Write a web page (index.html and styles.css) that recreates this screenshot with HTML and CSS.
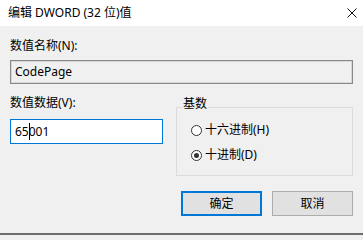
FILE: index.html
```html
<!DOCTYPE html>
<html lang="zh-CN">
<head>
<meta charset="utf-8">
<title>编辑 DWORD (32 位)值</title>
<link rel="stylesheet" href="styles.css">
</head>
<body>
<div class="window">
  <div class="titlebar">
    <span class="title">编辑 DWORD (32 位)值</span>
    <svg class="close" width="10" height="10" viewBox="0 0 10 10"><path d="M0.5 0.5L9.5 9.5M9.5 0.5L0.5 9.5" stroke="#111" stroke-width="1" fill="none"/></svg>
  </div>
  <div class="content">
    <div class="label">数值名称(N):</div>
    <div class="field readonly">CodePage</div>
    <div class="row">
      <div class="col-left">
        <div class="label">数值数据(V):</div>
        <div class="field focused">65<span class="caret"></span>001</div>
      </div>
      <fieldset class="group">
        <legend class="legend">基数</legend>
        <div class="radio"><span class="circle"></span>十六进制(H)</div>
        <div class="radio"><span class="circle checked"></span>十进制(D)</div>
      </fieldset>
    </div>
    <div class="buttons">
      <div class="btn default">确定</div>
      <div class="btn">取消</div>
    </div>
  </div>
</div>
</body>
</html>
```
FILE: styles.css
```css
html, body {
  margin: 0;
  padding: 0;
  width: 363px;
  height: 235px;
  overflow: hidden;
  background: #f0f0f0;
}
body {
  font-family: "Noto Sans", "Noto Sans CJK SC", sans-serif;
  font-size: 12px;
  color: #000;
}
.window {
  width: 363px;
  height: 235px;
}
.titlebar {
  height: 26px;
  background: #fff;
  display: flex;
  align-items: center;
  justify-content: space-between;
  padding: 0 6px 0 8px;
  box-sizing: border-box;
}
.title {
  line-height: 16px;
}
.close {
  display: block;
}
.content {
  height: 209px;
  box-sizing: border-box;
  padding: 12px 10px 0 10px;
  border-bottom: 2px solid #6e6e6e;
}
.label {
  line-height: 16px;
  height: 16px;
}
.field {
  margin-top: 6px;
  height: 24px;
  box-sizing: border-box;
  padding: 0 4px;
  display: flex;
  align-items: center;
  line-height: 16px;
}
.readonly {
  border: 1px solid #8a8a8a;
  box-shadow: inset 0 0 0 1px #d6d6d6;
  background: #f0f0f0;
}
.focused {
  margin-top: 8px;
  height: 25px;
  border: 1px solid #0078d7;
  background: #fff;
}
.caret {
  display: inline-block;
  width: 1px;
  height: 17px;
  background: #000;
  margin-right: -1px;
}
.row {
  display: flex;
  align-items: flex-start;
  margin-top: 11px;
}
.col-left {
  width: 153px;
}
.group {
  margin: 1px 0 0 13px;
  width: 177px;
  box-sizing: border-box;
  border: 1px solid #dcdcdc;
  padding: 1px 0 10px 14px;
  min-width: 0;
}
.legend {
  padding: 0 1px 7px 1px;
  margin-left: -9px;
  line-height: 16px;
}
.radio {
  height: 20px;
  display: flex;
  align-items: center;
  line-height: 16px;
}
.radio + .radio {
  margin-top: 5px;
}
.circle {
  width: 11px;
  height: 11px;
  box-sizing: border-box;
  border: 1px solid #333;
  border-radius: 50%;
  background: #fff;
  margin-right: 3px;
  display: grid;
  place-items: center;
}
.circle.checked::after {
  content: "";
  width: 5px;
  height: 5px;
  border-radius: 50%;
  background: #333;
}
.buttons {
  display: flex;
  justify-content: flex-end;
  gap: 10px;
  margin-top: 15px;
}
.btn {
  width: 81px;
  height: 25px;
  box-sizing: border-box;
  border: 1px solid #adadad;
  background: #e1e1e1;
  display: flex;
  align-items: center;
  justify-content: center;
  line-height: 16px;
}
.btn.default {
  border: 2px solid #0078d7;
}
```
